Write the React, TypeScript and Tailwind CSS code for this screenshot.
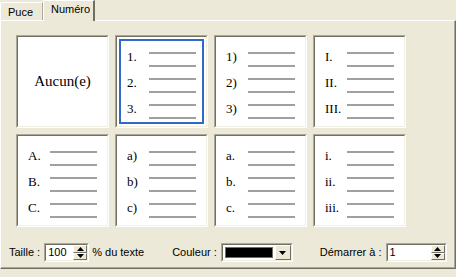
import React from "react";

const sans = { fontFamily: '"Liberation Sans", Arial, sans-serif' };
const serif = { fontFamily: '"Liberation Serif", "Times New Roman", serif' };

type Item = { kind: "none" } | { kind: "list"; labels: string[] };

const items: Item[] = [
  { kind: "none" },
  { kind: "list", labels: ["1.", "2.", "3."] },
  { kind: "list", labels: ["1)", "2)", "3)"] },
  { kind: "list", labels: ["I.", "II.", "III."] },
  { kind: "list", labels: ["A.", "B.", "C."] },
  { kind: "list", labels: ["a)", "b)", "c)"] },
  { kind: "list", labels: ["a.", "b.", "c."] },
  { kind: "list", labels: ["i.", "ii.", "iii."] },
];

function Sunken({ children, className = "" }: { children: React.ReactNode; className?: string }) {
  return (
    <div className={"border border-t-[#aca899] border-l-[#aca899] border-b-white border-r-white " + className}>
      <div className="h-full w-full border border-t-[#716f64] border-l-[#716f64] border-b-[#f1efe2] border-r-[#f1efe2]">
        {children}
      </div>
    </div>
  );
}

function Line() {
  return <div className="h-[2px] w-[47px] bg-[#a0a0a0]" />;
}

function Box({ item, selected }: { item: Item; selected?: boolean }) {
  return (
    <Sunken className="h-[93px] w-[93px]">
      <div className="h-full w-full bg-white p-[2px]">
        <div
          className={
            "h-full w-full border-2 " + (selected ? "border-[#316ac5]" : "border-transparent")
          }
        >
          {item.kind === "none" ? (
            <div
              className="flex h-full w-full items-center justify-center text-[15px] font-normal text-black"
              style={serif}
            >
              Aucun(e)
            </div>
          ) : (
            <div className="flex flex-col gap-[11px] pl-[6px] pt-[11px]">
              {item.labels.map((l) => (
                <div key={l} className="flex">
                  <div className="-mt-[3px] w-[22px] text-[13px] leading-[15px] text-black" style={serif}>
                    {l}
                  </div>
                  <div className="flex flex-col gap-[11px]">
                    <Line />
                    <Line />
                  </div>
                </div>
              ))}
            </div>
          )}
        </div>
      </div>
    </Sunken>
  );
}

function SpinBtn({ up }: { up?: boolean }) {
  return (
    <div className="flex flex-1 items-center justify-center border border-t-white border-l-white border-b-[#716f64] border-r-[#716f64] bg-[#ece9d8]">
      <svg width="7" height="4" viewBox="0 0 7 4">
        {up ? <path d="M3.5 0 L7 4 L0 4 Z" fill="#000" /> : <path d="M0 0 L7 0 L3.5 4 Z" fill="#000" />}
      </svg>
    </div>
  );
}

function Spin({ value, width }: { value: string; width: string }) {
  return (
    <Sunken className={"h-[19px] " + width}>
      <div className="flex h-full w-full bg-white">
        <div className="flex-1 pl-[2px] text-[11px] leading-[15px] text-black" style={sans}>
          {value}
        </div>
        <div className="flex w-[14px] flex-col bg-[#ece9d8]">
          <SpinBtn up />
          <SpinBtn />
        </div>
      </div>
    </Sunken>
  );
}

export default function App() {
  return (
    <div className="h-[277px] w-[456px] overflow-hidden bg-[#ece9d8] text-[11px] text-black" style={sans}>
      <div className="flex h-[20px] items-end">
        <div className="flex h-[18px] w-[43px] items-start rounded-tl-[2px] border-l border-t border-r border-l-white border-t-white border-r-[#aca899] pl-[7px] pt-[3px] leading-[13px]">
          Puce
        </div>
        <div className="relative z-10 -mb-[1px] flex h-[21px] w-[52px] items-start rounded-tl-[2px] border-l border-t border-r-2 border-l-white border-t-white border-r-[#716f64] bg-[#ece9d8] pl-[7px] pt-[2px] leading-[13px]">
          Numéro
        </div>
      </div>
      <div className="h-[249px] w-[456px] border border-t-white border-l-white border-b-[#716f64] border-r-[#716f64]">
        <div className="h-full w-full border-b border-r border-b-[#aca899] border-r-[#aca899]">
          <div className="grid grid-cols-[repeat(4,93px)] grid-rows-[repeat(2,93px)] gap-[6px] pl-[15px] pt-[14px]">
            {items.map((it, i) => (
              <Box key={i} item={it} selected={i === 1} />
            ))}
          </div>
          <div className="mt-[16px] flex h-[19px] items-center pl-[8px]">
            <span>Taille :</span>
            <Spin value="100" width="w-[45px] ml-[4px]" />
            <span className="ml-[3px]">% du texte</span>
            <span className="ml-[28px]">Couleur :</span>
            <Sunken className="ml-[4px] h-[19px] w-[72px]">
              <div className="flex h-full w-full bg-white">
                <div className="m-[2px] flex-1 border border-[#716f64] bg-black" />
                <div className="flex w-[16px] items-center justify-center border border-t-white border-l-white border-b-[#716f64] border-r-[#716f64] bg-[#ece9d8]">
                  <svg width="7" height="4" viewBox="0 0 7 4">
                    <path d="M0 0 L7 0 L3.5 4 Z" fill="#000" />
                  </svg>
                </div>
              </div>
            </Sunken>
            <span className="ml-[27px]">Démarrer à :</span>
            <Spin value="1" width="w-[61px] ml-[4px]" />
          </div>
        </div>
      </div>
    </div>
  );
}
